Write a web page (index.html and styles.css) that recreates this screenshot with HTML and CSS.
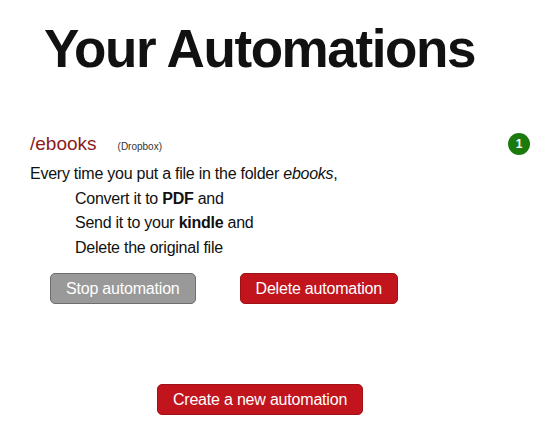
FILE: index.html
```html
<!DOCTYPE html>
<html>
<head>
<meta charset="utf-8">
<link rel="stylesheet" href="styles.css">
</head>
<body>
<h1 class="title">Your Automations</h1>
<div class="automation">
  <div class="auto-head">
    <span class="folder">/ebooks</span>
    <span class="service">(Dropbox)</span>
    <span class="badge">1</span>
  </div>
  <p class="trigger">Every time you put a file in the folder <em>ebooks</em>,</p>
  <ul class="steps">
    <li>Convert it to <b>PDF</b> and</li>
    <li>Send it to your <b>kindle</b> and</li>
    <li>Delete the original file</li>
  </ul>
  <div class="actions">
    <button class="btn btn-gray">Stop automation</button>
    <button class="btn btn-red">Delete automation</button>
  </div>
</div>
<div class="create">
  <button class="btn btn-red">Create a new automation</button>
</div>
</body>
</html>
```
FILE: styles.css
```css
html, body {
  margin: 0;
  padding: 0;
  background: #fff;
}
body {
  font-family: "Liberation Sans", Arial, sans-serif;
  color: #111;
  width: 558px;
  height: 439px;
  overflow: hidden;
}
.title {
  margin: 0;
  padding: 18px 0 0 44px;
  font-size: 53px;
  letter-spacing: -1.4px;
  line-height: 62px;
  font-weight: bold;
  color: #111;
}
.automation {
  padding: 52px 28px 0 30px;
}
.auto-head {
  display: flex;
  align-items: center;
  height: 24px;
}
.folder {
  color: #8c1a1a;
  font-size: 19px;
}
.service {
  font-size: 10px;
  color: #333;
  margin-left: 21px;
  margin-top: 4px;
}
.badge {
  margin-left: auto;
  width: 22px;
  height: 22px;
  border-radius: 50%;
  background: #1a7a0e;
  color: #fff;
  font-size: 12px;
  font-weight: bold;
  display: flex;
  align-items: center;
  justify-content: center;
}
.trigger {
  margin: 6px 0 0 0;
  font-size: 16px;
  letter-spacing: -0.25px;
  line-height: 24.6px;
}
.steps {
  list-style: none;
  margin: 0;
  padding: 0 0 0 45px;
  font-size: 16px;
  letter-spacing: -0.25px;
  line-height: 24.6px;
}
.actions {
  display: flex;
  gap: 44px;
  padding: 13px 0 0 20px;
}
.btn {
  font-family: "Liberation Sans", Arial, sans-serif;
  font-size: 16px;
  letter-spacing: -0.2px;
  height: 31px;
  padding: 0 15px;
  border-radius: 5px;
  color: #fff;
  cursor: pointer;
}
.btn-gray {
  background: #999;
  border: 1px solid #6e6e6e;
}
.btn-red {
  background: #c1141c;
  border: 1px solid #a01017;
}
.create {
  display: flex;
  justify-content: center;
  padding: 80px 38px 0 0;
}
```
